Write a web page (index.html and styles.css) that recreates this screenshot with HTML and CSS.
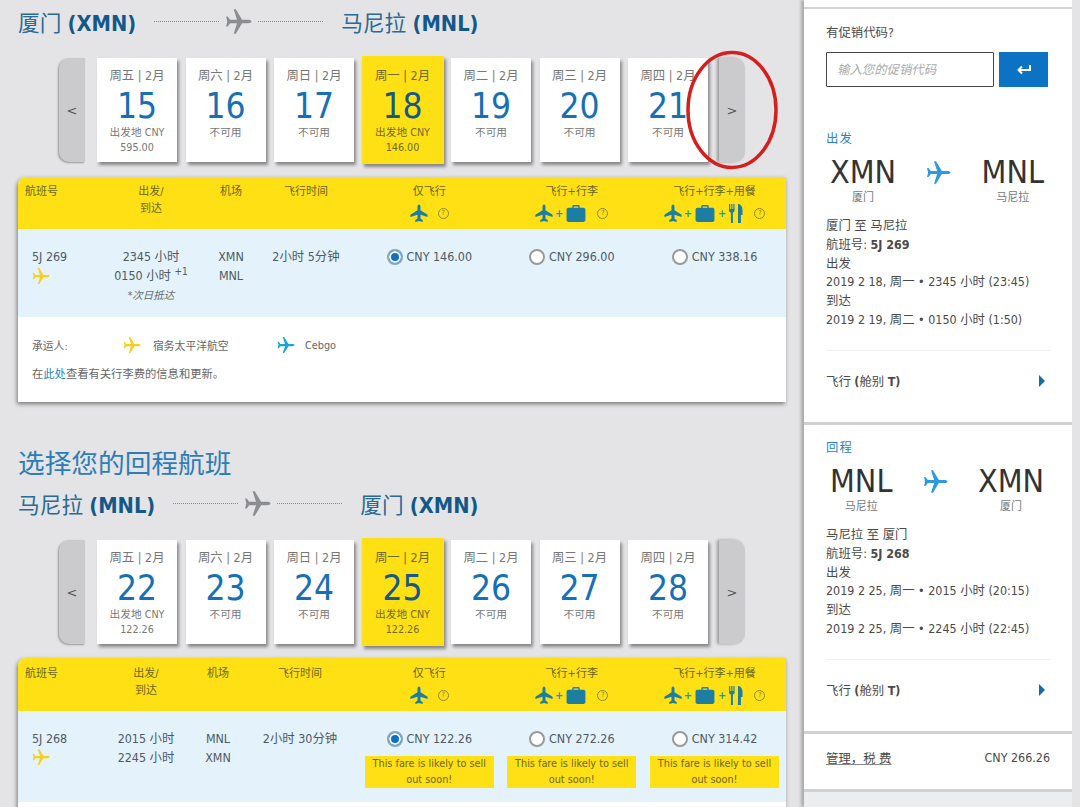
FILE: index.html
```html
<!DOCTYPE html>
<html lang="zh">
<head>
<meta charset="utf-8">
<title>选择航班</title>
<link rel="stylesheet" href="styles.css">
</head>
<body>
<svg class="defs" width="0" height="0" aria-hidden="true">
  <symbol id="plane" viewBox="0 0 24 24"><path d="M23.500 12c0-.9-1.400-1.500-3-1.500h-5.300L9.600 1.200H7.700l3 9.300H4.600L2.400 7.600H1l1 4.400-1 4.400h1.400l2.200-2.900h6.100l-3 9.300h1.900l5.600-9.300h5.300c1.600 0 3-.6 3-1.500z"/></symbol>
  <symbol id="plane-up" viewBox="0 0 24 24"><path d="M12 .5c1.200 0 2 1.400 2 3v4.800l9.500 6v2.900L14 14.300v5l3 2.200V24l-5-1.200L7 24v-2.500l3-2.200v-5L.5 17.200v-2.900l9.500-6V3.500c0-1.600.8-3 2-3z"/></symbol>
  <symbol id="bag" viewBox="0 0 20 18"><path d="M6 3V1.500C6 .7 6.700 0 7.500 0h5c.8 0 1.500.7 1.500 1.500V3h4c1.100 0 2 .9 2 2v11c0 1.100-.9 2-2 2H2c-1.100 0-2-.9-2-2V5c0-1.100.9-2 2-2zm1.500 0h5V1.500h-5z"/></symbol>
  <symbol id="meal" viewBox="0 0 14 19"><path d="M0 0h1.200v5h1V0h1.200v5h1V0h1.200v6.500c0 1-.8 1.800-1.700 2V19H1.900V8.500C.8 8.300 0 7.500 0 6.500zM9 0c2.500 0 4.500 2.500 4.500 6v5h-1.600v8H9z"/></symbol>
</svg>
<div class="page">
  <main class="main">
    <section class="leg leg-out">
      <h2 class="route">
        <span class="route-name">厦门 <b>(XMN)</b></span>
        <span class="dash"></span>
        <svg class="route-plane"><use href="#plane"/></svg>
        <span class="dash"></span>
        <span class="route-name">马尼拉 <b>(MNL)</b></span>
      </h2>
      <div class="dates">
        <button class="nav nav-prev">&lt;</button>
        <div class="day"><span class="dow">周五 | 2月</span><span class="num">15</span><span class="sub">出发地 CNY</span><span class="sub">595.00</span></div>
        <div class="day"><span class="dow">周六 | 2月</span><span class="num">16</span><span class="sub">不可用</span></div>
        <div class="day"><span class="dow">周日 | 2月</span><span class="num">17</span><span class="sub">不可用</span></div>
        <div class="day day-on"><span class="dow">周一 | 2月</span><span class="num">18</span><span class="sub">出发地 CNY</span><span class="sub">146.00</span></div>
        <div class="day"><span class="dow">周二 | 2月</span><span class="num">19</span><span class="sub">不可用</span></div>
        <div class="day"><span class="dow">周三 | 2月</span><span class="num">20</span><span class="sub">不可用</span></div>
        <div class="day"><span class="dow">周四 | 2月</span><span class="num">21</span><span class="sub">不可用</span></div>
        <button class="nav nav-next">&gt;</button>
        <svg class="ring" width="96" height="124" viewBox="0 0 96 124"><ellipse cx="48" cy="62" rx="44" ry="57.500"/></svg>
      </div>
      <div class="flights">
        <div class="grid grid-head">
          <div class="c-no">航班号</div>
          <div class="c-mid">出发/<br>到达</div>
          <div class="c-mid">机场</div>
          <div class="c-mid c-dur">飞行时间</div>
          <div class="c-mid">仅飞行<div class="pack"><svg class="i-plane"><use href="#plane-up"/></svg><span class="help">?</span></div></div>
          <div class="c-mid">飞行+行李<div class="pack"><svg class="i-plane"><use href="#plane-up"/></svg><span class="plus">+</span><svg class="i-bag"><use href="#bag"/></svg><span class="help">?</span></div></div>
          <div class="c-mid">飞行+行李+用餐<div class="pack"><svg class="i-plane"><use href="#plane-up"/></svg><span class="plus">+</span><svg class="i-bag"><use href="#bag"/></svg><span class="plus">+</span><svg class="i-meal"><use href="#meal"/></svg><span class="help">?</span></div></div>
        </div>
        <div class="grid grid-row row-out">
          <div class="c-no c-no-row">5J 269<svg class="i-yellow"><use href="#plane"/></svg></div>
          <div class="c-mid">2345 小时<br>0150 小时 <sup>+1</sup><em>*次日抵达</em></div>
          <div class="c-mid">XMN<br>MNL</div>
          <div class="c-mid c-dur">2小时 5分钟</div>
          <div class="c-fare"><div class="fare"><span class="radio radio-on"></span>CNY 146.00</div></div>
          <div class="c-fare"><div class="fare"><span class="radio"></span>CNY 296.00</div></div>
          <div class="c-fare"><div class="fare"><span class="radio"></span>CNY 338.16</div></div>
        </div>
        <div class="carrier">
          <div class="carrier-line">
            <span class="carrier-label">承运人:</span>
            <svg class="i-yellow"><use href="#plane"/></svg>
            <span class="carrier-a">宿务太平洋航空</span>
            <svg class="i-blue"><use href="#plane"/></svg>
            <span>Cebgo</span>
          </div>
          <p class="carrier-note">在<a href="#">此处</a>查看有关行李费的信息和更新。</p>
        </div>
      </div>
    </section>
    <section class="leg leg-ret">
      <h1 class="title">选择您的回程航班</h1>
      <h2 class="route">
        <span class="route-name">马尼拉 <b>(MNL)</b></span>
        <span class="dash"></span>
        <svg class="route-plane"><use href="#plane"/></svg>
        <span class="dash"></span>
        <span class="route-name">厦门 <b>(XMN)</b></span>
      </h2>
      <div class="dates">
        <button class="nav nav-prev">&lt;</button>
        <div class="day"><span class="dow">周五 | 2月</span><span class="num">22</span><span class="sub">出发地 CNY</span><span class="sub">122.26</span></div>
        <div class="day"><span class="dow">周六 | 2月</span><span class="num">23</span><span class="sub">不可用</span></div>
        <div class="day"><span class="dow">周日 | 2月</span><span class="num">24</span><span class="sub">不可用</span></div>
        <div class="day day-on"><span class="dow">周一 | 2月</span><span class="num">25</span><span class="sub">出发地 CNY</span><span class="sub">122.26</span></div>
        <div class="day"><span class="dow">周二 | 2月</span><span class="num">26</span><span class="sub">不可用</span></div>
        <div class="day"><span class="dow">周三 | 2月</span><span class="num">27</span><span class="sub">不可用</span></div>
        <div class="day"><span class="dow">周四 | 2月</span><span class="num">28</span><span class="sub">不可用</span></div>
        <button class="nav nav-next">&gt;</button>
      </div>
      <div class="flights">
        <div class="grid grid-head grid-ret">
          <div class="c-no">航班号</div>
          <div class="c-mid">出发/<br>到达</div>
          <div class="c-mid">机场</div>
          <div class="c-mid c-dur">飞行时间</div>
          <div class="c-mid">仅飞行<div class="pack"><svg class="i-plane"><use href="#plane-up"/></svg><span class="help">?</span></div></div>
          <div class="c-mid">飞行+行李<div class="pack"><svg class="i-plane"><use href="#plane-up"/></svg><span class="plus">+</span><svg class="i-bag"><use href="#bag"/></svg><span class="help">?</span></div></div>
          <div class="c-mid">飞行+行李+用餐<div class="pack"><svg class="i-plane"><use href="#plane-up"/></svg><span class="plus">+</span><svg class="i-bag"><use href="#bag"/></svg><span class="plus">+</span><svg class="i-meal"><use href="#meal"/></svg><span class="help">?</span></div></div>
        </div>
        <div class="grid grid-row grid-ret row-ret">
          <div class="c-no c-no-row">5J 268<svg class="i-yellow"><use href="#plane"/></svg></div>
          <div class="c-mid">2015 小时<br>2245 小时</div>
          <div class="c-mid">MNL<br>XMN</div>
          <div class="c-mid c-dur">2小时 30分钟</div>
          <div class="c-fare"><div class="fare"><span class="radio radio-on"></span>CNY 122.26</div><div class="notice">This fare is likely to sell out soon!</div></div>
          <div class="c-fare"><div class="fare"><span class="radio"></span>CNY 272.26</div><div class="notice">This fare is likely to sell out soon!</div></div>
          <div class="c-fare"><div class="fare"><span class="radio"></span>CNY 314.42</div><div class="notice">This fare is likely to sell out soon!</div></div>
        </div>
        <div class="flights-rest"></div>
      </div>
    </section>
  </main>
  <aside class="side">
    <div class="side-top"></div>
    <div class="panel panel-out">
      <div class="promo-label">有促销代码?</div>
      <div class="promo">
        <div class="promo-input">输入您的促销代码</div>
        <button class="promo-btn"><svg width="16" height="12" viewBox="0 0 16 12"><path d="M14 1v5H3M6 2.500 2.500 6 6 9.500" fill="none" stroke="#fff" stroke-width="2"/></svg></button>
      </div>
      <div class="leg-label leg-label-first">出发</div>
      <div class="codes">
        <div class="code"><strong>XMN</strong><span>厦门</span></div>
        <svg class="i-side"><use href="#plane"/></svg>
        <div class="code"><strong>MNL</strong><span>马尼拉</span></div>
      </div>
      <div class="lines">
        <div>厦门 至 马尼拉</div>
        <div>航班号: <b>5J 269</b></div>
        <div>出发</div>
        <div>2019 2 18, 周一 • 2345 小时 (23:45)</div>
        <div>到达</div>
        <div>2019 2 19, 周二 • 0150 小时 (1:50)</div>
      </div>
      <div class="fare-class"><span>飞行 <b>(</b>舱别 <b>T)</b></span><i class="tri"></i></div>
    </div>
    <div class="panel panel-ret">
      <div class="leg-label">回程</div>
      <div class="codes">
        <div class="code"><strong>MNL</strong><span>马尼拉</span></div>
        <svg class="i-side"><use href="#plane"/></svg>
        <div class="code"><strong>XMN</strong><span>厦门</span></div>
      </div>
      <div class="lines">
        <div>马尼拉 至 厦门</div>
        <div>航班号: <b>5J 268</b></div>
        <div>出发</div>
        <div>2019 2 25, 周一 • 2015 小时 (20:15)</div>
        <div>到达</div>
        <div>2019 2 25, 周一 • 2245 小时 (22:45)</div>
      </div>
      <div class="fare-class"><span>飞行 <b>(</b>舱别 <b>T)</b></span><i class="tri"></i></div>
    </div>
    <div class="panel panel-fee">
      <span class="fee-link">管理，税 费</span>
      <span>CNY 266.26</span>
    </div>
  </aside>
</div>
</body>
</html>
```
FILE: styles.css
```css
* { box-sizing: border-box; }
html, body { margin: 0; height: 807px; overflow: hidden; }
body {
  background: #e4e4e6;
  color: #555;
  font-family: "DejaVu Sans Condensed", "DejaVu Sans", "Noto Sans CJK SC", sans-serif;
  font-size: 12.400px;
}
.defs { position: absolute; }
.page { display: flex; width: 1080px; height: 807px; overflow: hidden; }
.main { width: 768px; margin-left: 18px; flex: none; }
.route {
  display: flex;
  align-items: center;
  gap: 6px;
  height: 24px;
  margin: 9px 0 0;
  font-size: 21.700px;
  font-weight: 400;
  color: #2a6a95;
  white-space: nowrap;
}
.route b { color: #12598a; }
.route-name:first-child { margin-right: 12px; }
.route-name:last-child { margin-left: 12px; }
.dash { width: 65px; border-top: 1px dotted #888; }
.route-plane { width: 27px; height: 27px; fill: #8b8d90; }
.dates {
  position: relative;
  display: flex;
  align-items: center;
  gap: 8.500px;
  height: 104px;
  margin: 25px 0 15px 41px;
}
.nav {
  width: 26px;
  height: 104px;
  padding: 0;
  border: 0;
  background: #cbcbce;
  color: #555;
  font: 13px "DejaVu Sans", sans-serif;
}
.nav-prev { border-radius: 10px 0 0 10px; margin-right: 3.500px; box-shadow: -1px 1px 2px #999; }
.nav-next { border-radius: 0 10px 10px 0; margin-left: 2.500px; box-shadow: -2px 0 3px #999; }
.day {
  display: flex;
  flex-direction: column;
  align-items: center;
  width: 80px;
  height: 104px;
  padding-top: 10px;
  background: #fff;
  box-shadow: 2px 3px 3px #888;
  color: #777;
  font-size: 12.400px;
}
.day-on { width: 82px; height: 108px; margin: 0 -1px; padding-top: 12px; background: #ffe014; color: #6e6a2a; }
.dow { line-height: 16px; }
.num { font-size: 35px; line-height: 44px; color: #1670b4; }
.day-on .num { color: #14598a; }
.sub { font-size: 10.700px; line-height: 14.500px; margin-top: -2px; }
.sub + .sub { margin-top: 0; }
.ring { position: absolute; left: 625px; top: -10px; pointer-events: none; }
.ring ellipse { fill: none; stroke: #d3201f; stroke-width: 3.500; }
.flights { background: #fff; border-top-left-radius: 8px; box-shadow: -1px 2px 4px #777; overflow: hidden; }
.leg-out .flights { height: 225px; }
.grid { display: grid; grid-template-columns: 90px 86px 74px 90px 142.500px 142.500px 143px; }
.grid-ret { grid-template-columns: 90px 76px 68px 106px 142.500px 142.500px 143px; }
.c-mid { text-align: center; }
.c-dur { padding-right: 14px; }
.grid-ret .c-dur { padding-right: 10px; }
.grid-head {
  height: 52px;
  padding-top: 6px;
  background: #ffe014;
  color: #6b6624;
  font-size: 11px;
  line-height: 17px;
}
.grid-ret.grid-head { height: 53px; padding-top: 7px; }
.c-no { padding-left: 7px; }
.pack { display: flex; align-items: center; justify-content: center; gap: 2px; height: 20px; margin-top: 3px; fill: #1c7fa2; }
.i-plane { width: 18px; height: 18px; }
.i-bag { width: 20px; height: 17px; margin: 0 1px; }
.i-meal { width: 14px; height: 19px; margin: 0 1px; }
.plus { color: #1c9ab0; font-weight: 700; font-size: 11px; line-height: 1; }
.help {
  width: 11px;
  height: 11px;
  margin-left: 8px;
  border: 1px solid #8b8a2e;
  border-radius: 50%;
  color: #7a7a2a;
  font-size: 7px;
  line-height: 9px;
  text-align: center;
}
.grid-row { background: #e3f2fb; color: #4f5a63; line-height: 19px; padding-top: 18px; }
.row-out { height: 88px; }
.row-ret { height: 91px; }
.c-no-row { display: flex; flex-direction: column; padding-left: 14px; }
.row-out .i-yellow { margin-top: 1px; }
.i-yellow { width: 18px; height: 18px; fill: #f7cf1c; }
sup { font-size: 10px; line-height: 0; vertical-align: 5px; }
em { display: block; font-size: 10.500px; color: #6a6a6a; line-height: 20px; }
.fare { display: flex; align-items: center; justify-content: center; gap: 4px; }
.radio { width: 16px; height: 16px; border: 2px solid #999; border-radius: 50%; background: #fff; }
.radio-on { border-color: #7fa7c4; background: #0f6fc0; box-shadow: inset 0 0 0 2px #fff; }
.notice {
  width: 129px;
  margin: 8px auto 0;
  padding: 0 4px;
  background: #ffe014;
  color: #6b6624;
  font-size: 10.800px;
  line-height: 16px;
  text-align: center;
}
.carrier { padding: 19px 14px 0; color: #666; font-size: 10.800px; }
.carrier-line { display: flex; align-items: center; height: 18px; }
.carrier-label { width: 91px; }
.carrier-a { width: 124px; margin-left: 12px; }
.i-blue { width: 18px; height: 18px; margin-right: 10px; fill: #1ba4d8; }
.carrier-note { margin: 12px 0 0; font-size: 11.300px; line-height: 18px; }
.carrier-note a { color: #2a84c0; text-decoration: none; }
.flights-rest { height: 20px; background: #fff; }
.leg-ret { margin-top: 46px; }
.title { margin: 0; font-size: 26.700px; font-weight: 400; line-height: 32px; color: #2d7db8; }
.leg-ret .route { margin-top: 11px; }
.leg-ret .dates { margin-bottom: 14px; }

.side { width: 268px; margin-left: 18px; flex: none; background: #ecedef; box-shadow: -3px 0 3px #aaa; color: #4a4a4a; }
.side-top { height: 9px; border-bottom: 2px solid #d2d3d3; background: #fff; }
.panel { padding: 0 22px; border-bottom: 3px solid #cfd0d1; background: #fff; }
.panel-out { height: 416px; padding-top: 16px; }
.panel-ret { height: 309px; padding-top: 15px; }
.panel-fee {
  display: flex;
  align-items: center;
  justify-content: space-between;
  height: 58px;
  padding-bottom: 8px;
}
.fee-link { text-decoration: underline; text-decoration-color: #888; }
.promo-label { line-height: 16px; }
.promo { display: flex; gap: 5px; width: 222px; margin-top: 11px; }
.promo-input {
  width: 168px;
  height: 35px;
  padding-left: 10px;
  border: 1px solid #444;
  border-radius: 1px;
  color: #aaa;
  font-style: italic;
  line-height: 33px;
}
.promo-btn { display: flex; align-items: center; justify-content: center; width: 49px; height: 35px; padding: 0; border: 0; background: #0b72c4; }
.leg-label { color: #2a84c0; line-height: 16px; letter-spacing: 1px; }
.leg-label-first { margin-top: 44px; }
.codes { display: flex; justify-content: space-between; align-items: flex-start; margin-top: 6px; padding: 0 6px 0 4px; }
.code { display: flex; flex-direction: column; align-items: center; }
.code strong { font-size: 32px; font-weight: 400; line-height: 38px; color: #333; }
.code span { font-size: 11px; line-height: 14px; color: #777; }
.i-side { width: 25px; height: 25px; margin-top: 7px; fill: #2d9ae0; }
.lines { margin-top: 12px; line-height: 18.800px; white-space: nowrap; }
.fare-class {
  display: flex;
  align-items: center;
  justify-content: space-between;
  margin-top: 20px;
  height: 61px;
  border-top: 1px solid #f0f0f0;
  padding-right: 5px;
}
.tri { width: 0; height: 0; border-left: 6px solid #146ea6; border-top: 6px solid transparent; border-bottom: 6px solid transparent; }
```
